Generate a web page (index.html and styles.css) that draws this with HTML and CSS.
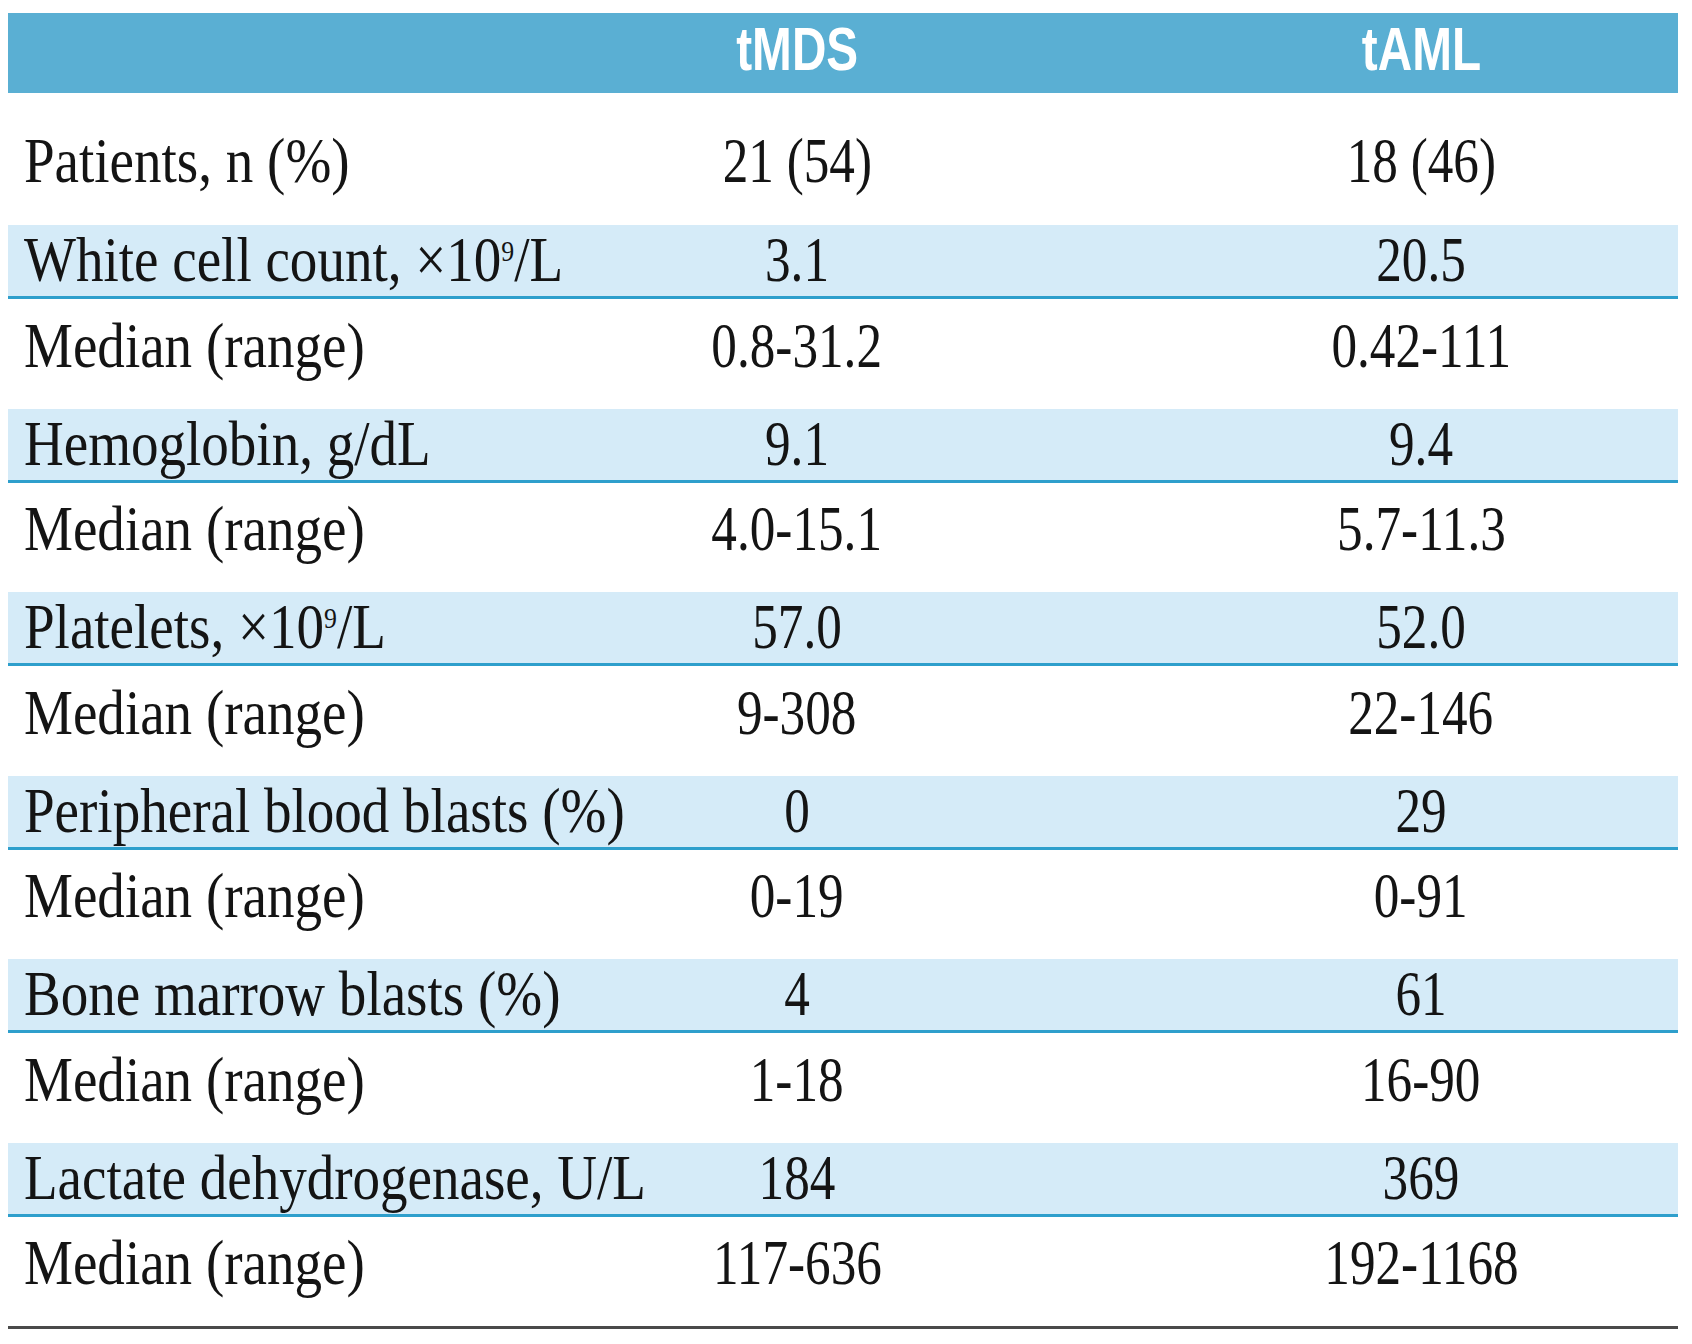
FILE: index.html
```html
<!DOCTYPE html>
<html>
<head>
<meta charset="utf-8">
<link rel="stylesheet" href="styles.css">
</head>
<body>
<div class="table">
  <div class="row head">
    <div class="cell"></div>
    <div class="cell val"><span class="hx">tMDS</span></div>
    <div class="cell val"><span class="hx">tAML</span></div>
  </div>
  <div class="row first">
    <div class="cell"><span class="tx lab">Patients, n (%)</span></div>
    <div class="cell val"><span class="tx">21 (54)</span></div>
    <div class="cell val"><span class="tx">18 (46)</span></div>
  </div>
  <div class="row band">
    <div class="cell"><span class="tx lab">White cell count, ×10<span class="sup">9</span>/L</span></div>
    <div class="cell val"><span class="tx">3.1</span></div>
    <div class="cell val"><span class="tx">20.5</span></div>
  </div>
  <div class="row plain">
    <div class="cell"><span class="tx lab">Median (range)</span></div>
    <div class="cell val"><span class="tx">0.8-31.2</span></div>
    <div class="cell val"><span class="tx">0.42-111</span></div>
  </div>
  <div class="row band">
    <div class="cell"><span class="tx lab">Hemoglobin, g/dL</span></div>
    <div class="cell val"><span class="tx">9.1</span></div>
    <div class="cell val"><span class="tx">9.4</span></div>
  </div>
  <div class="row plain">
    <div class="cell"><span class="tx lab">Median (range)</span></div>
    <div class="cell val"><span class="tx">4.0-15.1</span></div>
    <div class="cell val"><span class="tx">5.7-11.3</span></div>
  </div>
  <div class="row band">
    <div class="cell"><span class="tx lab">Platelets, ×10<span class="sup">9</span>/L</span></div>
    <div class="cell val"><span class="tx">57.0</span></div>
    <div class="cell val"><span class="tx">52.0</span></div>
  </div>
  <div class="row plain">
    <div class="cell"><span class="tx lab">Median (range)</span></div>
    <div class="cell val"><span class="tx">9-308</span></div>
    <div class="cell val"><span class="tx">22-146</span></div>
  </div>
  <div class="row band">
    <div class="cell"><span class="tx lab">Peripheral blood blasts (%)</span></div>
    <div class="cell val"><span class="tx">0</span></div>
    <div class="cell val"><span class="tx">29</span></div>
  </div>
  <div class="row plain">
    <div class="cell"><span class="tx lab">Median (range)</span></div>
    <div class="cell val"><span class="tx">0-19</span></div>
    <div class="cell val"><span class="tx">0-91</span></div>
  </div>
  <div class="row band">
    <div class="cell"><span class="tx lab">Bone marrow blasts (%)</span></div>
    <div class="cell val"><span class="tx">4</span></div>
    <div class="cell val"><span class="tx">61</span></div>
  </div>
  <div class="row plain">
    <div class="cell"><span class="tx lab">Median (range)</span></div>
    <div class="cell val"><span class="tx">1-18</span></div>
    <div class="cell val"><span class="tx">16-90</span></div>
  </div>
  <div class="row band">
    <div class="cell"><span class="tx lab">Lactate dehydrogenase, U/L</span></div>
    <div class="cell val"><span class="tx">184</span></div>
    <div class="cell val"><span class="tx">369</span></div>
  </div>
  <div class="row plain">
    <div class="cell"><span class="tx lab">Median (range)</span></div>
    <div class="cell val"><span class="tx">117-636</span></div>
    <div class="cell val"><span class="tx">192-1168</span></div>
  </div>
</div>
</body>
</html>
```

FILE: styles.css
```css
html, body {
  margin: 0;
  padding: 0;
  background: #ffffff;
}

body {
  padding: 13px 0 0 8px;
}

.table {
  width: 1670px;
  border-bottom: 3px solid #4a4a4a;
  font-family: "Liberation Serif", "Times New Roman", serif;
  color: #141414;
}

.row {
  display: grid;
  grid-template-columns: 422px 734px 514px;
  box-sizing: border-box;
}

.cell {
  display: flex;
  align-items: center;
  white-space: nowrap;
}

.cell.val {
  justify-content: center;
}

.head {
  height: 80px;
  background: #5aafd3;
  padding-bottom: 8px;
}

.hx {
  display: inline-block;
  font-family: "Liberation Sans", Arial, sans-serif;
  font-weight: bold;
  font-size: 62px;
  line-height: 1;
  color: #ffffff;
  transform: scaleX(0.77);
  transform-origin: center;
}

.first {
  height: 132px;
  padding-top: 20px;
  padding-bottom: 16px;
}

.band {
  height: 74px;
  background: #d5ebf8;
  border-bottom: 3px solid #2e9fcc;
  padding-bottom: 15px;
}

.plain {
  height: 109.5px;
  padding-bottom: 16px;
}

.tx {
  display: inline-block;
  font-size: 64px;
  line-height: 1.1;
  transform: scaleX(0.8);
  transform-origin: center;
}

.tx.lab {
  margin-left: 16px;
  transform: scaleX(0.86);
  transform-origin: left center;
}

.sup {
  font-size: 30px;
  vertical-align: 20px;
  line-height: 0;
}
```
